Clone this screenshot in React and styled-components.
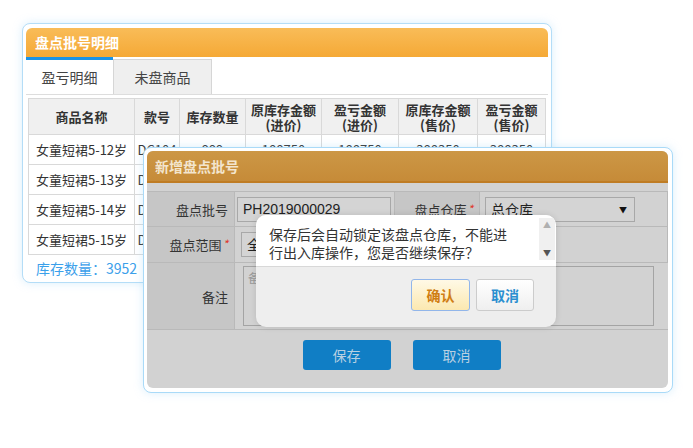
import React from 'react';
import styled, { createGlobalStyle } from 'styled-components';

const GlobalStyle = createGlobalStyle`
  html, body {
    margin: 0;
    padding: 0;
    background: #ffffff;
  }
  body {
    font-family: "Liberation Sans", "Noto Sans CJK SC", sans-serif;
    color: #333;
  }
`;

const columns = [
  { title: ['商品名称'], width: 106 },
  { title: ['款号'], width: 45 },
  { title: ['库存数量'], width: 66 },
  { title: ['原库存金额', '(进价)'], width: 76 },
  { title: ['盈亏金额', '(进价)'], width: 77 },
  { title: ['原库存金额', '(售价)'], width: 79 },
  { title: ['盈亏金额', '(售价)'], width: 68 }
];

const rows = [
  ['女童短裙5-12岁', 'DC104', '999', '188750', '188750', '388350', '388350'],
  ['女童短裙5-13岁', 'DC105', '999', '188750', '188750', '388350', '388350'],
  ['女童短裙5-14岁', 'DC106', '999', '188750', '188750', '388350', '388350'],
  ['女童短裙5-15岁', 'DC107', '999', '188750', '188750', '388350', '388350']
];

export default function App() {
  return (
    <>
      <GlobalStyle />
      <Page lang="zh-CN">
        <DetailCard>
          <CardHeader>盘点批号明细</CardHeader>
          <Tabs>
            <Tab active>盈亏明细</Tab>
            <Tab>未盘商品</Tab>
          </Tabs>
          <Table>
            <colgroup>
              {columns.map((c, i) => (
                <col key={i} style={{ width: c.width }} />
              ))}
            </colgroup>
            <thead>
              <tr>
                {columns.map((c, i) => (
                  <Th key={i}>
                    {c.title.map((t, j) => (
                      <div key={j}>{t}</div>
                    ))}
                  </Th>
                ))}
              </tr>
            </thead>
            <tbody>
              {rows.map((r, i) => (
                <tr key={i}>
                  {r.map((v, j) => (
                    <Td key={j}>{v}</Td>
                  ))}
                </tr>
              ))}
            </tbody>
          </Table>
          <Summary>库存数量：3952</Summary>
        </DetailCard>

        <Modal>
          <ModalInner>
            <ModalHeader>新增盘点批号</ModalHeader>
            <Form>
              <Label>盘点批号</Label>
              <Field>
                <Input>PH2019000029</Input>
              </Field>
              <Label>
                盘点仓库<Star>*</Star>
              </Label>
              <Field>
                <Select wide>
                  总仓库
                  <Caret>▼</Caret>
                </Select>
              </Field>

              <Label>
                盘点范围<Star>*</Star>
              </Label>
              <Field span={3}>
                <Select>全部</Select>
              </Field>

              <Label>备注</Label>
              <Field span={3}>
                <TextArea>备注</TextArea>
              </Field>
            </Form>
            <ModalFooter>
              <BlueButton>保存</BlueButton>
              <BlueButton>取消</BlueButton>
            </ModalFooter>
          </ModalInner>

          <Confirm>
            <ConfirmBody>
              保存后会自动锁定该盘点仓库，不能进行出入库操作，您是否继续保存？
              <ScrollBar>
                <Arrow>▲</Arrow>
                <Arrow dark>▼</Arrow>
              </ScrollBar>
            </ConfirmBody>
            <ConfirmActions>
              <OkButton>确认</OkButton>
              <CancelButton>取消</CancelButton>
            </ConfirmActions>
          </Confirm>
        </Modal>
      </Page>
    </>
  );
}

const Page = styled.div`
  position: relative;
  width: 693px;
  height: 448px;
  padding: 23px 0 0 22px;
  box-sizing: border-box;
`;

const DetailCard = styled.div`
  width: 530px;
  height: 260px;
  box-sizing: border-box;
  background: #fff;
  border: 1px solid #b4ddf7;
  border-radius: 8px;
  padding: 4px 3px 3px 3px;
  box-shadow: 0 0 10px rgba(150, 205, 245, 0.35);
  display: flex;
  flex-direction: column;
`;

const CardHeader = styled.div`
  height: 29px;
  line-height: 29px;
  padding-left: 9px;
  border-radius: 6px 6px 0 0;
  background: linear-gradient(#f9bc58, #f5a936);
  color: #fff;
  font-family: "Noto Sans CJK SC", sans-serif;
  font-size: 14px;
  font-weight: bold;
`;

const Tabs = styled.div`
  display: flex;
  align-items: flex-end;
  height: 38px;
  border-bottom: 1px solid #dddddd;
  box-sizing: border-box;
`;

const Tab = styled.div`
  box-sizing: border-box;
  width: ${p => (p.active ? '87px' : '99px')};
  height: ${p => (p.active ? '37px' : '35px')};
  display: flex;
  align-items: center;
  justify-content: center;
  font-family: "Noto Sans CJK SC", sans-serif;
  font-size: 14px;
  color: #444;
  background: ${p => (p.active ? '#fff' : '#efefef')};
  border-top: ${p => (p.active ? '3px solid #1b93e6' : '1px solid #d6d6d6')};
  border-left: ${p => (p.active ? 'none' : '1px solid #d6d6d6')};
  border-right: ${p => (p.active ? 'none' : '1px solid #d6d6d6')};
`;

const Table = styled.table`
  margin: 3px 0 0 2px;
  width: 517px;
  border-collapse: collapse;
  table-layout: fixed;
  font-family: "Noto Sans CJK SC", sans-serif;
`;

const Th = styled.th`
  height: 35px;
  padding: 0;
  background: #f0f0f0;
  border: 1px solid #d9d9d9;
  font-size: 13px;
  font-weight: bold;
  line-height: 15px;
  color: #333;
  text-align: center;
`;

const Td = styled.td`
  height: 29px;
  padding: 0;
  border: 1px solid #d9d9d9;
  font-size: 13px;
  color: #333;
  text-align: center;
  white-space: nowrap;
  overflow: hidden;
`;

const Summary = styled.div`
  padding: 3px 0 0 10px;
  font-family: "Noto Sans CJK SC", sans-serif;
  font-size: 14px;
  color: #3ba0ea;
`;

const Modal = styled.div`
  position: absolute;
  left: 143px;
  top: 147px;
  width: 530px;
  height: 246px;
  box-sizing: border-box;
  background: #fff;
  border: 1px solid #a9daf8;
  border-radius: 8px;
  padding: 3px 4px 4px 3px;
  box-shadow: 0 0 10px rgba(150, 205, 245, 0.35);
`;

const ModalInner = styled.div`
  height: 100%;
  background: #d2d2d2;
  border-radius: 6px;
  overflow: hidden;
  display: flex;
  flex-direction: column;
`;

const ModalHeader = styled.div`
  height: 30px;
  line-height: 30px;
  padding-left: 8px;
  background: linear-gradient(#cc9746, #c68b38);
  border-bottom: 2px solid #bf7c24;
  color: #f3e5cd;
  font-family: "Noto Sans CJK SC", sans-serif;
  font-size: 14px;
  font-weight: bold;
`;

const Form = styled.div`
  margin-top: 8px;
  display: grid;
  grid-template-columns: 88px 160px 85px 1fr;
  grid-template-rows: 35px 36px 66px;
  border-top: 1px solid #b9b9b9;
  border-bottom: 1px solid #b9b9b9;
  font-family: "Noto Sans CJK SC", sans-serif;
`;

const Label = styled.div`
  display: flex;
  align-items: center;
  justify-content: flex-end;
  padding-right: 6px;
  background: #c6c6c6;
  border-bottom: 1px solid #b9b9b9;
  border-right: 1px solid #b9b9b9;
  font-size: 13px;
  color: #333;
  &:nth-last-child(2) {
    border-bottom: none;
  }
`;

const Star = styled.span`
  color: #e03a2c;
  font-style: italic;
  font-size: 12px;
  margin-left: 1px;
  align-self: flex-start;
  margin-top: 8px;
`;

const Field = styled.div`
  grid-column: span ${p => p.span || 1};
  display: flex;
  align-items: center;
  padding: 0 3px;
  border-bottom: 1px solid #b9b9b9;
  border-right: 1px solid #b9b9b9;
  &:last-child {
    border-bottom: none;
    border-right: none;
  }
`;

const Input = styled.div`
  box-sizing: border-box;
  width: 154px;
  height: 25px;
  line-height: 23px;
  padding-left: 5px;
  border: 1px solid #a8a8a8;
  background: #d4d4d4;
  font-family: "Liberation Sans", sans-serif;
  font-size: 14px;
  color: #222;
  margin-left: -1px;
`;

const Select = styled.div`
  position: relative;
  box-sizing: border-box;
  width: 150px;
  height: 25px;
  line-height: 23px;
  padding-left: 5px;
  margin-left: ${p => (p.wide ? '2px' : '3px')};
  border: 1px solid #a8a8a8;
  background: #d4d4d4;
  font-size: 14px;
  color: #222;
`;

const Caret = styled.span`
  position: absolute;
  right: 7px;
  top: 0;
  font-size: 8px;
  color: #111;
`;

const TextArea = styled.div`
  box-sizing: border-box;
  width: 411px;
  height: 60px;
  margin: 0 0 0 5px;
  padding: 2px 4px;
  border: 1px solid #a4a4a4;
  font-size: 12px;
  color: #9a9a9a;
`;

const ModalFooter = styled.div`
  flex: 1;
  display: flex;
  justify-content: center;
  align-items: flex-start;
  gap: 22px;
  padding: 10px 12px 0 0;
`;

const BlueButton = styled.div`
  width: 88px;
  height: 30px;
  line-height: 30px;
  text-align: center;
  background: #107ec5;
  border-radius: 3px;
  color: #b9d0e2;
  font-family: "Noto Sans CJK SC", sans-serif;
  font-size: 14px;
`;

const Confirm = styled.div`
  position: absolute;
  left: 112px;
  top: 67px;
  width: 300px;
  height: 112px;
  background: #eeeeee;
  border-radius: 10px;
  box-shadow: 0 0 6px rgba(0, 0, 0, 0.12);
  overflow: hidden;
  display: flex;
  flex-direction: column;
  font-family: "Noto Sans CJK SC", sans-serif;
`;

const ConfirmBody = styled.div`
  position: relative;
  height: 52px;
  box-sizing: border-box;
  padding: 10px 42px 0 13px;
  background: #fff;
  border-bottom: 1px solid #d8d8d8;
  font-size: 14px;
  line-height: 18px;
  color: #333;
`;

const ScrollBar = styled.div`
  position: absolute;
  right: 1px;
  top: 3px;
  width: 16px;
  height: 42px;
  background: #f0f0f0;
  display: flex;
  flex-direction: column;
  justify-content: space-between;
  align-items: center;
`;

const Arrow = styled.span`
  font-size: 8px;
  line-height: 14px;
  color: ${p => (p.dark ? '#555' : '#b0b0b0')};
`;

const ConfirmActions = styled.div`
  display: flex;
  justify-content: flex-end;
  gap: 6px;
  padding: 12px 22px 0 0;
`;

const ActionButton = styled.div`
  box-sizing: border-box;
  width: 59px;
  height: 32px;
  line-height: 30px;
  text-align: center;
  border-radius: 3px;
  font-size: 14px;
  font-weight: bold;
`;

const OkButton = styled(ActionButton)`
  background: linear-gradient(#fff9e6, #fbe8b0);
  border: 1px solid #92b6ea;
  color: #d07e14;
`;

const CancelButton = styled(ActionButton)`
  width: 58px;
  background: linear-gradient(#ffffff, #efefef);
  border: 1px solid #cccccc;
  color: #2b8fd0;
`;
